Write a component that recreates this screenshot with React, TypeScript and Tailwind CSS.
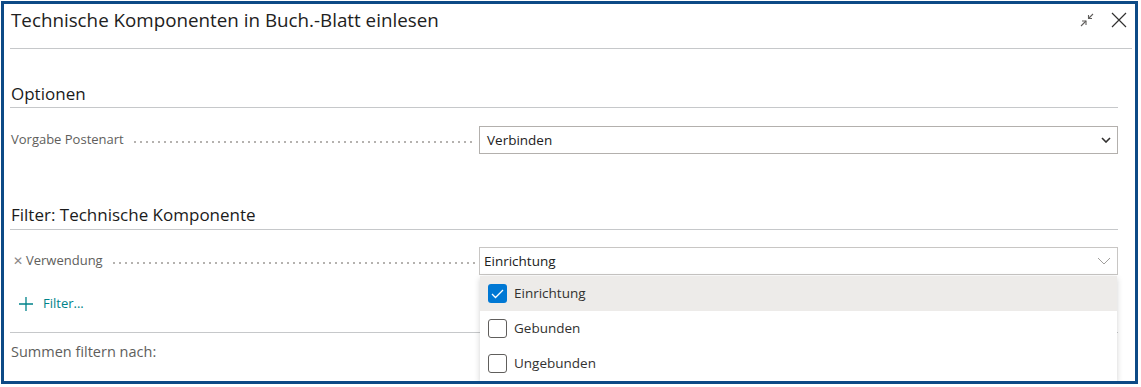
import React from "react";

const font = { fontFamily: '"Open Sans", "Noto Sans", Arial, sans-serif' };

function CollapseIcon() {
  return (
    <svg width="18" height="18" viewBox="0 0 18 18" fill="none" stroke="#605e5c" strokeWidth="1.1">
      <path d="M3 15 L8 10" />
      <path d="M4 10 H8 V14" />
      <path d="M15 3 L10.5 7.5" />
      <path d="M10.5 4 V7.5 H14" />
    </svg>
  );
}

function CloseIcon() {
  return (
    <svg width="18" height="18" viewBox="0 0 18 18" fill="none" stroke="#323130" strokeWidth="1.2">
      <path d="M2 2 L16 16 M16 2 L2 16" />
    </svg>
  );
}

function Chevron({ light }: { light?: boolean }) {
  return light ? (
    <svg width="14" height="8" viewBox="0 0 14 8" fill="none" stroke="#a19f9d" strokeWidth="1">
      <path d="M1 1 L7 7 L13 1" />
    </svg>
  ) : (
    <svg width="10" height="6" viewBox="0 0 10 6" fill="none" stroke="#323130" strokeWidth="1.6">
      <path d="M1 1 L5 5 L9 1" />
    </svg>
  );
}

function Checkbox({ checked }: { checked?: boolean }) {
  return checked ? (
    <div className="w-[19px] h-[19px] rounded-[3px] bg-[#0078d4] flex items-center justify-center">
      <svg width="13" height="10" viewBox="0 0 13 10" fill="none" stroke="white" strokeWidth="1.3">
        <path d="M1 5 L4.5 8.5 L12 1" />
      </svg>
    </div>
  ) : (
    <div className="w-[19px] h-[19px] rounded-[3px] border border-[#605e5c] bg-white" />
  );
}

function Leader() {
  return (
    <div className="flex-1 ml-[8px] mr-[4px] h-[2px] translate-y-[2px] bg-[radial-gradient(circle,#b3b0ad_0.7px,transparent_1px)] bg-[length:6px_2px] bg-repeat-x" />
  );
}

export default function App() {
  return (
    <div className="w-[1141px] h-[387px] bg-white pt-[1px] pl-[1px]" style={font}>
      <div className="w-[1137px] h-[383px] border-[3px] border-[#0d4a86] overflow-hidden flex flex-col bg-white">
        {/* Header */}
        <div className="h-[45px] ml-[6px] mr-[3px] border-b border-[#c6c8ca] flex items-center justify-between shrink-0">
          <div className="text-[18.8px] text-[#212121] pl-[1px] -mt-[11px]">Technische Komponenten in Buch.-Blatt einlesen</div>
          <div className="flex items-center gap-[14px] pr-[4px] -mt-[12px]">
            <CollapseIcon />
            <CloseIcon />
          </div>
        </div>

        <div className="ml-[6px] mr-[17px] flex flex-col">
          {/* Optionen */}
          <div className="mt-[31px] h-[28px] border-b border-[#c6c8ca] flex items-center text-[17px] text-[#1b1b1b] pl-[1px]">
            Optionen
          </div>

          <div className="mt-[18px] h-[28px] flex items-center">
            <div className="w-[469px] flex items-center text-[13px] text-[#605e5c] pl-[1px]">
              <span>Vorgabe Postenart</span>
              <Leader />
            </div>
            <div className="flex-1 h-[28px] border border-[#b3b0ad] flex items-center justify-between pl-[7px] pr-[6px] text-[13.5px] text-[#212121]">
              <span>Verbinden</span>
              <Chevron />
            </div>
          </div>

          {/* Filter heading */}
          <div className="mt-[46px] h-[30px] border-b border-[#c6c8ca] flex items-center text-[17px] text-[#1b1b1b] pl-[1px]">
            Filter: Technische Komponente
          </div>

          <div className="mt-[17px] h-[28px] flex items-center">
            <div className="w-[469px] flex items-center text-[13px] text-[#605e5c] pl-[3px]">
              <span className="text-[12px] text-[#8a8886] mr-[3px]">✕</span>
              <span>Verwendung</span>
              <Leader />
            </div>
            <div className="relative flex-1 h-[28px]">
              <div className="h-[28px] border border-[#c8c6c4] flex items-center justify-between pl-[4px] pr-[6px] text-[13.5px] text-[#212121]">
                <span>Einrichtung</span>
                <Chevron light />
              </div>
              <div className="absolute left-[1px] right-[1px] top-[29px] bg-white shadow-[0_2px_6px_rgba(0,0,0,0.18)] z-10 text-[13.5px] text-[#323130]">
                <div className="h-[35px] bg-[#edebe9] flex items-center pl-[8px] gap-[7px]">
                  <Checkbox checked />
                  <span>Einrichtung</span>
                </div>
                <div className="h-[35px] flex items-center pl-[8px] gap-[7px]">
                  <Checkbox />
                  <span>Gebunden</span>
                </div>
                <div className="h-[35px] flex items-center pl-[8px] gap-[7px]">
                  <Checkbox />
                  <span>Ungebunden</span>
                </div>
              </div>
            </div>
          </div>

          {/* + Filter */}
          <div className="mt-[17px] h-[24px] flex items-center pl-[8px] text-[13px] text-[#00838a]">
            <svg width="16" height="16" viewBox="0 0 16 16" fill="none" stroke="#00838a" strokeWidth="1.3">
              <path d="M8 1 V15 M1 8 H15" />
            </svg>
            <span className="ml-[9px]">Filter...</span>
          </div>

          <div className="mt-[16px] border-t border-[#c6c8ca]" />
          <div className="h-[38px] flex items-center text-[14.5px] text-[#605e5c] pl-[1px]">
            Summen filtern nach:
          </div>
        </div>
      </div>
    </div>
  );
}
